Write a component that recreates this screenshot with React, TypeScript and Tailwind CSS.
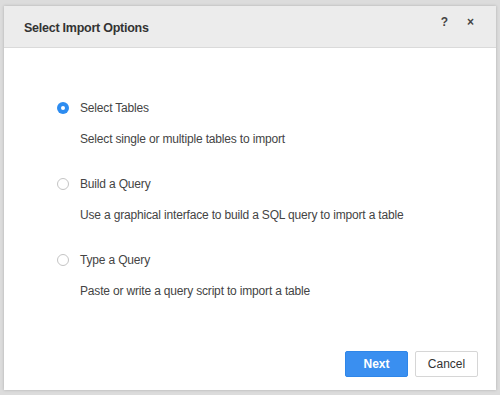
import React from "react";

function Radio({ checked }: { checked?: boolean }) {
  return checked ? (
    <span className="w-[12px] h-[12px] rounded-full bg-[#2d8cf0] flex items-center justify-center shrink-0">
      <span className="w-[4px] h-[4px] rounded-full bg-white" />
    </span>
  ) : (
    <span className="w-[12px] h-[12px] rounded-full border border-[#c4c4c4] bg-white shrink-0" />
  );
}

function Option({ label, desc, checked, top }: { label: string; desc: string; checked?: boolean; top: string }) {
  return (
    <div className={top}>
      <div className="flex items-center h-[16px]">
        <div className="w-[23px] flex">
          <Radio checked={checked} />
        </div>
        <span className="text-[12px] text-[#444] tracking-[-0.17px]">{label}</span>
      </div>
      <div className="pl-[23px] mt-[15px] text-[12px] text-[#444] h-[16px] leading-[16px] tracking-[-0.17px]">{desc}</div>
    </div>
  );
}

export default function App() {
  return (
    <div className="w-[500px] h-[395px] bg-[#dcdcdc] p-[4px] pt-[6px] pb-[5px]" style={{ fontFamily: '"Liberation Sans", Arial, sans-serif' }}>
      <div className="w-[492px] h-[384px] bg-white flex flex-col shadow-[0_0_3px_rgba(0,0,0,0.2)]">
        <div className="h-[42px] bg-[#ececec] border-b border-[#dadada] flex items-start justify-between pl-[20px] pr-[22px] shrink-0">
          <span className="mt-[13px] text-[12.5px] font-bold text-[#333] tracking-[-0.25px]">Select Import Options</span>
          <div className="flex items-center gap-[19px] mt-[7px] text-[#444]">
            <span className="text-[12px] font-bold">?</span>
            <span className="text-[12px] font-bold">×</span>
          </div>
        </div>
        <div className="flex-1 pl-[53px] pt-[52px]">
          <Option label="Select Tables" desc="Select single or multiple tables to import" checked top="" />
          <Option label="Build a Query" desc="Use a graphical interface to build a SQL query to import a table" top="mt-[29px]" />
          <Option label="Type a Query" desc="Paste or write a query script to import a table" top="mt-[29px]" />
        </div>
        <div className="flex justify-end gap-[7px] pr-[18px] pb-[13px]">
          <button className="w-[63px] h-[26px] bg-[#3a8ff0] border border-[#2f86e8] rounded-[2px] text-white text-[12px] font-bold">Next</button>
          <button className="w-[63px] h-[26px] bg-white border border-[#d6d6d6] rounded-[2px] text-[#333] text-[12px]">Cancel</button>
        </div>
      </div>
    </div>
  );
}
